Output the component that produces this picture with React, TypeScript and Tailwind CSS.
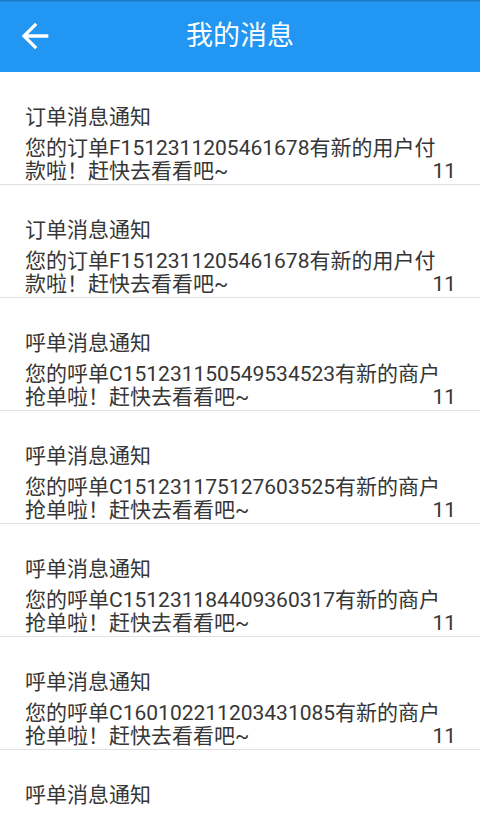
import React from "react";

const rows = [
  { title: "订单消息通知", l1: "您的订单F1512311205461678有新的用户付", l2: "款啦！赶快去看看吧~" },
  { title: "订单消息通知", l1: "您的订单F1512311205461678有新的用户付", l2: "款啦！赶快去看看吧~" },
  { title: "呼单消息通知", l1: "您的呼单C151231150549534523有新的商户", l2: "抢单啦！赶快去看看吧~" },
  { title: "呼单消息通知", l1: "您的呼单C151231175127603525有新的商户", l2: "抢单啦！赶快去看看吧~" },
  { title: "呼单消息通知", l1: "您的呼单C151231184409360317有新的商户", l2: "抢单啦！赶快去看看吧~" },
  { title: "呼单消息通知", l1: "您的呼单C160102211203431085有新的商户", l2: "抢单啦！赶快去看看吧~" },
  { title: "呼单消息通知", l1: "您的呼单C160102211203431085有新的商户", l2: "抢单啦！赶快去看看吧~" },
];

export default function App() {
  return (
    <div
      className="w-[480px] h-[814px] overflow-hidden bg-white"
      style={{ fontFamily: 'Roboto, "Noto Sans CJK SC", sans-serif' }}
    >
      <header className="relative h-[72px] bg-[#2196f3] flex items-center justify-center">
        <div className="absolute top-0 left-0 right-0 h-[2px] bg-gradient-to-b from-[#1a6fb8] to-[#2196f3]" />
        <button className="absolute left-[15px] top-[16px] w-[40px] h-[40px] flex items-center justify-center">
          <svg width="40" height="40" viewBox="0 0 24 24" fill="white">
            <path d="M20 11H7.83l5.59-5.59L12 4l-8 8 8 8 1.41-1.41L7.83 13H20v-2z" />
          </svg>
        </button>
        <h1 className="text-white text-[27px] leading-[36px] font-normal">我的消息</h1>
      </header>
      <div className="flex flex-col">
        {rows.map((r, i) => (
          <div key={i} className="pt-[31px] pb-px pl-[25px] pr-[24px] border-b border-[#e0e0e0] text-[#363636]">
            <div className="text-[21px] leading-[28px] whitespace-nowrap">{r.title}</div>
            <div className="mt-[6px] flex flex-col text-[21px] leading-[23px]">
              <div className="whitespace-nowrap">{r.l1}</div>
              <div className="flex justify-between">
                <span className="whitespace-nowrap">{r.l2}</span>
                <span>11</span>
              </div>
            </div>
          </div>
        ))}
      </div>
    </div>
  );
}
